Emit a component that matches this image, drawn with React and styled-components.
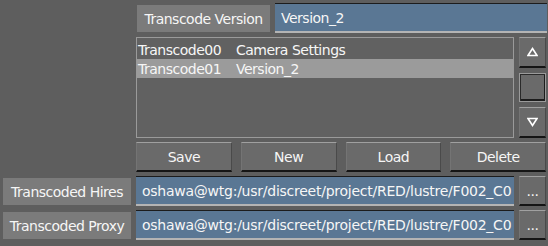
import React from "react";
import styled, { createGlobalStyle } from "styled-components";

const Global = createGlobalStyle`
  html, body { margin: 0; padding: 0; background: #5e5e5e; }
  body {
    font-family: "DejaVu Sans", "Liberation Sans", sans-serif;
    font-size: 14px;
    letter-spacing: -0.5px;
    color: #f6f6f6;
  }
  * { box-sizing: border-box; }
`;

const Panel = styled.div`
  width: 548px;
  height: 246px;
  background: #5e5e5e;
  display: grid;
  grid-template-columns: 128px 378px 27px;
  column-gap: 5px;
  grid-template-rows: 30px 101px 30px 30px 30px;
  row-gap: 4px;
  padding: 3px 2px 0 3px;
`;

const TopRow = styled.div`
  grid-column: 2 / 4;
  display: flex;
  gap: 5px;
  margin-left: 1px;
  margin-right: -1px;
`;

const Label = styled.div`
  width: ${(p) => p.$w || "auto"};
  background: #7b7b7b;
  display: flex;
  align-items: center;
  justify-content: center;
  white-space: nowrap;
  margin: 2px 0 1px;
  color: #f6f6f6;
`;

const Field = styled.div`
  flex: 1;
  min-width: 0;
  background: #5a7794;
  border-top: 1px solid #1c1c1c;
  border-bottom: 2px solid #b4b4b4;
  display: flex;
  align-items: center;
  padding: 0 6px;
  white-space: nowrap;
  overflow: hidden;
  color: #f6f6f6;
  letter-spacing: ${(p) => (p.$path ? "-0.25px" : "-0.5px")};
`;

const List = styled.div`
  border: 1px solid #9a9a9a;
  background: #616161;
  padding-top: 2px;
  display: flex;
  flex-direction: column;
`;

const ListRow = styled.div`
  height: 19px;
  display: flex;
  align-items: center;
  background: ${(p) => (p.$selected ? "#9b9b9b" : "transparent")};
  padding-left: 1px;
  white-space: nowrap;
`;

const Col = styled.span`
  width: 98px;
  flex: none;
`;

const ScrollCol = styled.div`
  display: flex;
  flex-direction: column;
  gap: 5px;
`;

const Btn = styled.button`
  font: inherit;
  letter-spacing: inherit;
  color: #f6f6f6;
  background: #6a6a6a;
  border: none;
  border-top: 1px solid #a0a0a0;
  border-left: 1px solid #747474;
  border-right: 1px solid #4a4a4a;
  border-bottom: 2px solid #151515;
  padding: 0;
  display: flex;
  align-items: center;
  justify-content: center;
  height: ${(p) => p.$h || "100%"};
  cursor: default;
`;

const Thumb = styled.div`
  height: 30px;
  border: 1px solid #9a9a9a;
  background: #6a6a6a;
  box-shadow: inset 1px 1px 0 #2a2a2a, inset -1px -2px 0 #1c1c1c;
`;

const ButtonRow = styled.div`
  grid-column: 2 / 4;
  display: grid;
  grid-template-columns: repeat(4, 1fr);
  column-gap: 9px;
`;

const Spacer = styled.div``;

const Tri = ({ down }) => (
  <svg width="11" height="10" viewBox="0 0 11 10">
    <polygon
      points={down ? "1,1.5 10,1.5 5.5,8.5" : "5.5,1.5 10,8.5 1,8.5"}
      fill="none"
      stroke="#ffffff"
      strokeWidth="1.6"
    />
  </svg>
);

export default function App() {
  return (
    <>
      <Global />
      <Panel>
        <Spacer />
        <TopRow>
          <Label $w="133px">Transcode Version</Label>
          <Field>Version_2</Field>
        </TopRow>

        <Spacer />
        <List>
          <ListRow>
            <Col>Transcode00</Col>
            <span>Camera Settings</span>
          </ListRow>
          <ListRow $selected>
            <Col>Transcode01</Col>
            <span>Version_2</span>
          </ListRow>
        </List>
        <ScrollCol>
          <Btn $h="31px"><Tri /></Btn>
          <Thumb />
          <Btn $h="31px"><Tri down /></Btn>
        </ScrollCol>

        <Spacer />
        <ButtonRow>
          <Btn>Save</Btn>
          <Btn>New</Btn>
          <Btn>Load</Btn>
          <Btn>Delete</Btn>
        </ButtonRow>

        <Label>Transcoded Hires</Label>
        <Field $path>oshawa@wtg:/usr/discreet/project/RED/lustre/F002_C0</Field>
        <Btn>...</Btn>

        <Label>Transcoded Proxy</Label>
        <Field $path>oshawa@wtg:/usr/discreet/project/RED/lustre/F002_C0</Field>
        <Btn>...</Btn>
      </Panel>
    </>
  );
}
